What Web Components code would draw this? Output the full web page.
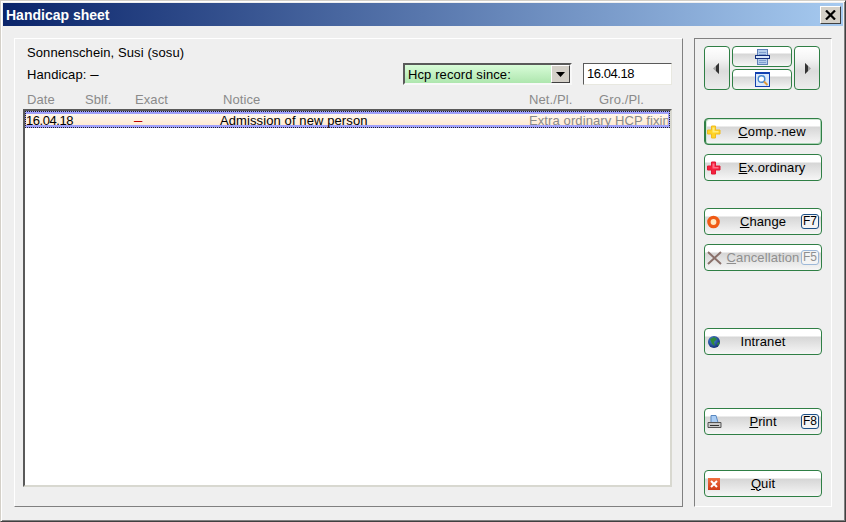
<!DOCTYPE html>
<html>
<head>
<meta charset="utf-8">
<title>Handicap sheet</title>
<style>
    html, body { margin: 0; height: 100%; background: #efefef; }
    body { font-family: "Liberation Sans", Arial, sans-serif; font-size: 13px; letter-spacing: 0.1px; color: #000; }
    .dash { font-size: 15px; line-height: 13px; }
    .num { letter-spacing: -0.45px; }
</style>
</head>
<body>
<template id="hcp_button">
<style>
    :host { display: block; height: 27px; box-sizing: border-box; }
    .btn {
        height: 100%;
        box-sizing: border-box;
        display: flex;
        align-items: center;
        border: 1px solid #2f7f45;
        border-radius: 4px;
        background: linear-gradient(#fff 0, #fff 7px, #d6d6d6 8px, #f6f6f6 100%);
        padding: 0 2px;
    }
    :host([default]) .btn { box-shadow: inset 1px 0 0 #2f7f45, inset 2px 1px 0 #cfe6d4, inset -1px -1px 0 #a9d3b4; }
    .icon { width: 18px; height: 16px; flex: none; display: flex; }
    .label { flex: 1; text-align: center; white-space: nowrap; padding-bottom: 1px; }
    .key {
        flex: none;
        width: 18px;
        height: 15px;
        box-sizing: border-box;
        border: 1px solid #1c4f86;
        border-radius: 3px;
        background: #f4f4f4;
        font-size: 12px;
        line-height: 13px;
        text-align: center;
    }
    :host(:not([key])) .key { visibility: hidden; }
    :host([shift]) .key { display: none; }
    :host([disabled]) .label { color: #8f8f8f; }
    :host([disabled]) .key { color: #8f8f8f; border-color: #9db8d8; }
</style>
<div class="btn">
    <span class="icon"><slot name="icon"></slot></span>
    <span class="label"><slot></slot></span>
    <span class="key"></span>
</div>
</template>

<template id="hcp_nav">
<style>
    :host { display: block; }
    .nav { display: grid; grid-template-columns: 26px 60px 26px; grid-template-rows: 21px 21px; gap: 2px; height: 44px; }
    .b {
        display: flex;
        align-items: center;
        justify-content: center;
        box-sizing: border-box;
        border: 1px solid #2f7f45;
        border-radius: 4px;
        background: linear-gradient(#fff 0, #fff 6px, #d6d6d6 7px, #f6f6f6 100%);
    }
    .side { grid-row: 1 / 3; background: linear-gradient(#fff 0, #f4f4f4 12px, #dcdcdc 24px, #ececec 100%); }
    .left { grid-column: 1; padding-right: 2px; }
    .right { grid-column: 3; padding-left: 2px; }
    .mid { grid-column: 2; }
</style>
<div class="nav">
    <div class="b side left">
        <svg width="6" height="11" viewBox="0 0 6 11"><path d="M6 0V11L0 5.500Z" fill="#a0a0a0"/><path d="M6 0V11L3 8V3Z" fill="#333"/></svg>
    </div>
    <div class="b mid">
        <svg width="15" height="16" viewBox="0 0 15 16">
            <rect x="2.500" y="0.500" width="10" height="15" fill="#b4cdec" stroke="#5e80b8"/>
            <path d="M4 3.500H11M4 5.500H11M4 11.500H11M4 13.500H11" stroke="#7f9fce"/>
            <rect x="0.500" y="6.500" width="14" height="3" fill="#dbe9fa" stroke="#14307e"/>
        </svg>
    </div>
    <div class="b side right">
        <svg width="6" height="11" viewBox="0 0 6 11"><path d="M0 0V11L6 5.500Z" fill="#a0a0a0"/><path d="M0 0V11L3 8V3Z" fill="#333"/></svg>
    </div>
    <div class="b mid">
        <svg width="15" height="15" viewBox="0 0 15 15">
            <rect x="0.500" y="0.500" width="14" height="14" fill="#dbe9fa" stroke="#1240b0"/>
            <rect x="0" y="0" width="15" height="2" fill="#1240b0"/>
            <circle cx="6.500" cy="7" r="3.300" fill="#fff" stroke="#4a8ad0" stroke-width="1.400"/>
            <path d="M9 9.500L12.500 13" stroke="#e09a3a" stroke-width="2"/>
        </svg>
    </div>
</div>
</template>

<template id="hcp_row">
<style>
    :host { display: block; }
    .row {
        height: 17px;
        box-sizing: border-box;
        display: grid;
        grid-template-columns: 108px 86px 309px 1fr;
        align-items: center;
        padding: 2px 2px 0 1px;
        box-shadow: inset 0 3px 0 #a0a0fa, inset 0 -3px 0 #a0a0fa, inset 1px 0 0 #a0a0fa, inset -2px 0 0 #a0a0fa;
        outline: 1px dotted #222;
        outline-offset: -1px;
        background: linear-gradient(#fffaf2, #ffe8cc);
        white-space: nowrap;
        line-height: 15px;
    }
    .minus { color: #c00000; }
    .grey { color: #8a8a8a; overflow: hidden; }
</style>
<div class="row">
    <span><slot name="date"></slot></span>
    <span class="minus"><slot name="exact"></slot></span>
    <span><slot name="notice"></slot></span>
    <span class="grey"><slot name="net"></slot></span>
</div>
</template>

<template id="hcp_head">
<style>
    :host { display: block; color: #8a8a8a; height: 18px; line-height: 17px; }
    .h { display: grid; grid-template-columns: 58px 50px 88px 306px 70px 1fr; white-space: nowrap; }
</style>
<div class="h"><slot></slot></div>
</template>

<template id="hcp_list">
<style>
    :host {
        display: block;
        box-sizing: border-box;
        height: 378px;
        margin: 0 0 0 -4px;
        background: #fff;
        border: 2px solid;
        border-color: #5a5a5a #d8d8d0 #d8d8d0 #5a5a5a;
    }
</style>
<slot></slot>
</template>

<template id="hcp_sheet">
<style>
    :host {
        display: flex;
        flex-direction: column;
        height: 522px;
        box-sizing: border-box;
        border: 1px solid;
        border-color: #d4d0c8 #404040 #404040 #d4d0c8;
        box-shadow: inset 1px 1px 0 #fff, inset -1px -1px 0 #808080;
        background: #efefef;
    }
    .title {
        margin: 2px 2px 0 2px;
        height: 23px;
        flex: none;
        display: flex;
        align-items: center;
        justify-content: space-between;
        padding: 0 2px 0 3px;
        background: linear-gradient(90deg, #0a246a, #a6caf0);
        color: #fff;
        font-weight: bold;
        font-size: 14px;
        letter-spacing: 0;
    }
    .close {
        width: 21px;
        height: 18px;
        box-sizing: border-box;
        background: #d4d0c8;
        border: 1px solid;
        border-color: #fff #404040 #404040 #fff;
        display: flex;
        align-items: center;
        justify-content: center;
    }
    .body { display: flex; flex: 1; gap: 11px; padding: 12px 13px 14px 13px; min-height: 0; }
    .main {
        width: 669px;
        box-sizing: border-box;
        border: 1px solid;
        border-color: #fff #808080 #808080 #fff;
        padding: 7px 10px 19px 12px;
    }
    .side {
        width: 139px;
        box-sizing: border-box;
        border: 1px solid;
        border-color: #808080 #fff #fff #808080;
        padding: 7px 9px 9px 9px;
        display: flex;
        flex-direction: column;
    }
</style>
<div class="title">
    <span><slot name="title"></slot></span>
    <span class="close">
        <svg width="11" height="10" viewBox="0 0 11 10"><path d="M1 0.500L10 9.500M10 0.500L1 9.500" stroke="#000" stroke-width="2.200"/></svg>
    </span>
</div>
<div class="body">
    <div class="main"><slot name="main"></slot></div>
    <div class="side"><slot name="side"></slot></div>
</div>
</template>

<hcp-sheet>
    <span slot="title">Handicap sheet</span>
    <div slot="main">
        <div style="height:17px;line-height:13px">Sonnenschein, Susi (sosu)</div>
        <div style="display:flex;height:28px;align-items:flex-start">
            <span style="flex:none;width:376px;line-height:15px;padding-top:4px">Handicap: <span class="dash">–</span></span>
            <hcp-select>Hcp record since:</hcp-select>
            <hcp-date><span class="num">16.04.18</span></hcp-date>
        </div>
        <hcp-head>
            <span>Date</span><span>Sblf.</span><span>Exact</span><span>Notice</span><span>Net./Pl.</span><span>Gro./Pl.</span>
        </hcp-head>
        <hcp-list>
            <hcp-row>
                <span slot="date" class="num">16.04.18</span>
                <span slot="exact" class="dash">–</span>
                <span slot="notice">Admission of new person</span>
                <span slot="net">Extra ordinary HCP fixing</span>
            </hcp-row>
        </hcp-list>
    </div>
    <div slot="side" style="display:flex;flex-direction:column;height:100%">
        <hcp-nav></hcp-nav>
        <hcp-button shift default style="margin-top:28px">
            <svg slot="icon" width="14" height="16" viewBox="0 0 14 16"><path d="M4.500 2H8.500V6H13V10H8.500V14H4.500V10H0.500V6H4.500Z" fill="#ffd424" stroke="#f0bc20" stroke-linejoin="round"/><path d="M5.500 3.500H7.500V7H11.500V8.500H5.500Z" fill="#ffec80"/></svg>
            <u>C</u>omp.-new
        </hcp-button>
        <hcp-button shift style="margin-top:9px">
            <svg slot="icon" width="14" height="16" viewBox="0 0 14 16"><path d="M4.500 2H8.500V6H13V10H8.500V14H4.500V10H0.500V6H4.500Z" fill="#f4203c" stroke="#e01834" stroke-linejoin="round"/><path d="M5.500 3.500H7.500V7H11.500V8.500H5.500Z" fill="#ff7088"/></svg>
            <u>E</u>x.ordinary
        </hcp-button>
        <hcp-button key="F7" style="margin-top:27px">
            <svg slot="icon" width="14" height="16" viewBox="0 0 14 16"><circle cx="6.500" cy="8" r="4.600" fill="#ffe8c0" stroke="#f05a14" stroke-width="3.400"/></svg>
            <u>C</u>hange
        </hcp-button>
        <hcp-button key="F5" disabled style="margin-top:9px">
            <svg slot="icon" width="16" height="16" viewBox="0 0 16 16"><path d="M1 2L14 14M14 2L1 14" stroke="#8a706a" stroke-width="2"/></svg>
            <u>C</u>ancellation
        </hcp-button>
        <hcp-button style="margin-top:57px">
            <svg slot="icon" width="14" height="16" viewBox="0 0 14 16">
                <defs><radialGradient id="globe" cx="0.4" cy="0.35" r="0.7"><stop offset="0" stop-color="#4a8ae0"/><stop offset="1" stop-color="#102a70"/></radialGradient></defs>
                <circle cx="7" cy="8" r="6" fill="url(#globe)"/><path d="M3 5L7 3L10 5L7 8L8 12L5 10Z" fill="#2f8a3a"/><path d="M10 9L13 8L11 12Z" fill="#2f8a3a"/>
            </svg>
            Intranet
        </hcp-button>
        <hcp-button key="F8" style="margin-top:53px">
            <svg slot="icon" width="15" height="16" viewBox="0 0 15 16"><path d="M4 1.500H9L11 8.500H4Z" fill="#a9cdf5" stroke="#5a88c0"/><path d="M1 8.500H14V13.500H1Z" fill="#c8c8c8" stroke="#555"/><path d="M3 11.500H12" stroke="#333"/></svg>
            <u>P</u>rint
        </hcp-button>
        <hcp-button style="margin-top:35px">
            <svg slot="icon" width="14" height="16" viewBox="0 0 14 16">
                <defs><linearGradient id="quit" x1="0" y1="0" x2="0" y2="1"><stop offset="0" stop-color="#f07040"/><stop offset="1" stop-color="#d03c18"/></linearGradient></defs>
                <rect x="1" y="2" width="12" height="12" fill="url(#quit)"/><path d="M4 5L10 11M10 5L4 11" stroke="#fff" stroke-width="2"/>
            </svg>
            <u>Q</u>uit
        </hcp-button>
    </div>
</hcp-sheet>

<script>
    function shadow_from(el, id) {
        const root = el.attachShadow({ mode: "open" });
        root.appendChild(document.getElementById(id).content.cloneNode(true));
        return root;
    }

    customElements.define('hcp-sheet', class extends HTMLElement {
        constructor() { super(); shadow_from(this, 'hcp_sheet'); }
    });
    customElements.define('hcp-head', class extends HTMLElement {
        constructor() { super(); shadow_from(this, 'hcp_head'); }
    });
    customElements.define('hcp-list', class extends HTMLElement {
        constructor() { super(); shadow_from(this, 'hcp_list'); }
    });
    customElements.define('hcp-row', class extends HTMLElement {
        constructor() { super(); shadow_from(this, 'hcp_row'); }
    });
    customElements.define('hcp-nav', class extends HTMLElement {
        constructor() { super(); shadow_from(this, 'hcp_nav'); }
    });
    customElements.define('hcp-button', class extends HTMLElement {
        constructor() { super(); this.shadowDOM = shadow_from(this, 'hcp_button'); }
        connectedCallback() {
            this.shadowDOM.querySelector('.key').textContent = this.getAttribute('key') || '';
        }
    });
    customElements.define('hcp-select', class extends HTMLElement {
        constructor() {
            super();
            this.attachShadow({ mode: "open" }).innerHTML = `
<style>
    :host { display: flex; flex: none; width: 169px; height: 22px; box-sizing: border-box; border: 2px solid; border-color: #5a5a5a #f8f8f8 #f8f8f8 #5a5a5a; }
    .txt { flex: 1; padding-left: 3px; line-height: 20px; background: linear-gradient(#d8fcd8, #aee6ae); }
    .arrow { width: 19px; box-sizing: border-box; background: #d4d0c8; border: 1px solid; border-color: #fff #404040 #404040 #fff; display: flex; align-items: center; justify-content: center; }
</style>
<span class="txt"><slot></slot></span>
<span class="arrow"><svg width="9" height="5" viewBox="0 0 9 5"><path d="M0 0H9L4.500 5Z" fill="#000"/></svg></span>`;
        }
    });
    customElements.define('hcp-date', class extends HTMLElement {
        constructor() {
            super();
            this.attachShadow({ mode: "open" }).innerHTML = `
<style>
    :host { display: block; flex: none; margin-left: 11px; width: 89px; height: 22px; box-sizing: border-box; border: 1px solid; border-color: #5a5a5a #e8e8e0 #e8e8e0 #5a5a5a; background: #fff; padding-left: 3px; line-height: 19px; }
</style>
<slot></slot>`;
        }
    });
</script>
</body>
</html>
